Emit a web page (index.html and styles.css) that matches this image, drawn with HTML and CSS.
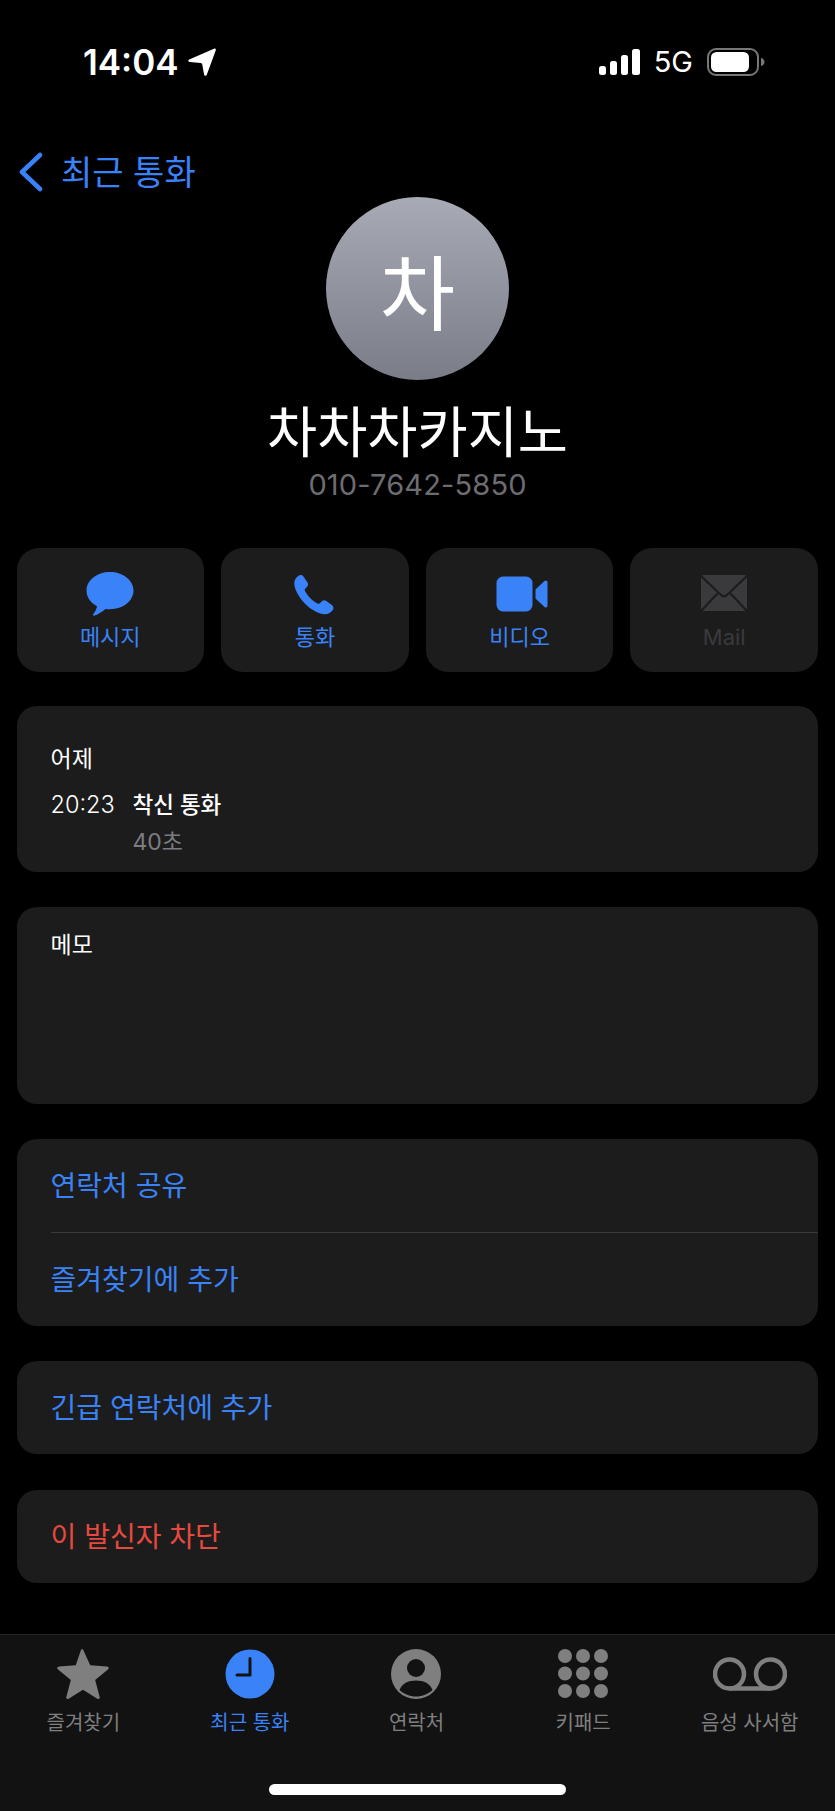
FILE: index.html
```html
<!DOCTYPE html>
<html lang="ko">
<head>
  <meta charset="UTF-8">
  <meta name="viewport" content="width=device-width, initial-scale=1.0">
  <title>차차차카지노</title>
  <link rel="stylesheet" href="styles.css">
</head>
<body>
  <div class="status-bar">
    <div class="status-left">
      <span class="time">14:04</span>
      <svg class="location-icon" viewBox="0 0 28 28"><path d="M26 .8 C27.4 .2 28.2 1 27.7 2.4 L18.8 26.8 C18.2 28.3 16.4 28.2 16.1 26.6 L14.2 16.2 C14.1 15.4 13.6 15 12.8 14.9 L1.8 14 C.2 13.8 -.2 12.2 1.2 11.5 Z" fill="#fff"/></svg>
    </div>
    <div class="status-right">
      <svg class="signal-icon" viewBox="0 0 41 26">
        <rect x="0" y="17" width="7" height="9" rx="2.5"/>
        <rect x="11" y="12" width="7" height="14" rx="2.5"/>
        <rect x="22" y="6" width="7" height="20" rx="2.5"/>
        <rect x="33" y="0" width="8" height="26" rx="2.5"/>
      </svg>
      <span class="network">5G</span>
      <svg class="battery-icon" viewBox="0 0 58 28">
        <rect x="1" y="1" width="50" height="26" rx="8" fill="none" stroke="#77777a" stroke-width="2"/>
        <rect x="4" y="4" width="38" height="20" rx="5.5" fill="#fff"/>
        <path d="M54 10 C56.5 10.5 57.5 12.5 57.5 14 C57.5 15.5 56.5 17.5 54 18 Z" fill="#77777a"/>
      </svg>
    </div>
  </div>

  <div class="nav">
    <svg class="back-icon" viewBox="0 0 26 40"><path d="M22 3 L4 20 L22 37" fill="none" stroke="#3a82f7" stroke-width="4.6" stroke-linecap="round" stroke-linejoin="round"/></svg>
    <span class="back-text">최근 통화</span>
  </div>

  <div class="profile">
    <div class="avatar">차</div>
    <div class="name">차차차카지노</div>
    <div class="phone">010-7642-5850</div>
  </div>

  <div class="actions">
    <div class="action">
      <svg class="action-icon" viewBox="-5.5 0 58 44"><path d="M23.5 0 C36.5 0 47 8.2 47 18.6 C47 29 36.5 37.2 23.5 37.2 C21.6 37.2 20.2 37.1 19 36.9 C15.5 39.8 11 42.6 8 43.6 C6.6 44 6 42.8 6.8 41.9 C8.3 40.2 10 37.5 10.5 34.2 C4 31 0 25.3 0 18.6 C0 8.2 10.5 0 23.5 0 Z" fill="#3a82f7"/></svg>
      <span class="action-label">메시지</span>
    </div>
    <div class="action">
      <svg class="action-icon" viewBox="-8 -2.5 58 44"><path d="M4.2 1.4 C6 .1 8.2 .3 9.4 2 L13.4 7.8 C14.4 9.3 14.3 11 13 12.3 L11.2 14.2 C10.6 14.9 10.6 15.6 11 16.4 C13.6 21.2 18.6 26.4 23.6 29 C24.4 29.4 25.1 29.3 25.8 28.7 L27.7 26.9 C29 25.7 30.8 25.5 32.3 26.5 L37.9 30.4 C39.7 31.7 40 33.9 38.6 35.8 C36.4 38.6 33.6 39.9 30.4 39.7 C22 39.2 13.6 32.6 8.6 26.6 C3.6 20.6 0 13.4 .3 8.6 C.4 5.6 1.6 3.2 4.2 1.4 Z" fill="#3a82f7"/></svg>
      <span class="action-label">통화</span>
    </div>
    <div class="action">
      <svg class="action-icon" viewBox="-5.5 -4.5 58 44"><rect x="0" y="0" width="36" height="35" rx="6.5" fill="#3a82f7"/><path d="M39 13 L48 4.6 C49.4 3.4 51 4.2 51 6 L51 29 C51 30.8 49.4 31.6 48 30.4 L39 22 Z" fill="#3a82f7"/></svg>
      <span class="action-label">비디오</span>
    </div>
    <div class="action action-disabled">
      <svg class="action-icon" viewBox="-6 -3 58 44">
        <rect x="0" y="0" width="46" height="36" rx="2.5" fill="#3a3a3c"/>
        <path d="M0 1 L20 20 C21.8 21.6 24.2 21.6 26 20 L46 1 M0 36 L16.5 18.5 M46 36 L29.5 18.5" fill="none" stroke="#1c1c1c" stroke-width="2.2"/>
      </svg>
      <span class="action-label">Mail</span>
    </div>
  </div>

  <div class="cards">
    <div class="card card-history">
      <div class="card-text">어제</div>
      <div class="call-row">
        <span class="call-time">20:23</span>
        <span class="call-type">착신 통화</span>
      </div>
      <div class="call-length">40초</div>
    </div>
    <div class="card card-memo">
      <div class="card-text">메모</div>
    </div>
    <div class="card">
      <div class="link">연락처 공유</div>
      <div class="divider"></div>
      <div class="link">즐겨찾기에 추가</div>
    </div>
    <div class="card">
      <div class="link">긴급 연락처에 추가</div>
    </div>
    <div class="card">
      <div class="link link-red">이 발신자 차단</div>
    </div>
  </div>

  <div class="tab-bar">
    <div class="tabs">
      <div class="tab">
        <svg class="tab-icon" viewBox="-10 0 74 53"><path d="M27 1.5 L34.4 17.6 L51.4 18.8 C53.4 19 53.9 20.6 52.4 21.8 L39.4 32.6 L44 50 C44.4 51.6 43 52.6 41.6 51.7 L27 42.6 L12.4 51.7 C11 52.6 9.6 51.6 10 50 L14.6 32.6 L1.6 21.8 C.1 20.6 .6 19 2.6 18.8 L19.6 17.6 L24.6 3 C25.2 .8 26.2 .4 27 1.5 Z" fill="#7f7f7f"/></svg>
        <span class="tab-label">즐겨찾기</span>
      </div>
      <div class="tab tab-active">
        <svg class="tab-icon" viewBox="-12 -1 74 52"><circle cx="25" cy="25" r="24.5" fill="#3a82f7"/><path d="M25 9.5 L25 26 L12 26" fill="none" stroke="#121212" stroke-width="3" stroke-linecap="round" stroke-linejoin="round"/></svg>
        <span class="tab-label">최근 통화</span>
      </div>
      <div class="tab">
        <svg class="tab-icon" viewBox="-12 -1 74 52"><circle cx="25" cy="25" r="25" fill="#7f7f7f"/><circle cx="25" cy="19" r="9" fill="#121212"/><path d="M8.5 41 C11 34.5 17 31.5 25 31.5 C33 31.5 39 34.5 41.5 41 C37 45 31.5 47.5 25 47.5 C18.5 47.5 13 45 8.5 41 Z" fill="#121212"/></svg>
        <span class="tab-label">연락처</span>
      </div>
      <div class="tab">
        <svg class="tab-icon" viewBox="-12 -1 74 52" fill="#7f7f7f">
          <circle cx="7" cy="7" r="7"/><circle cx="25" cy="7" r="7"/><circle cx="43" cy="7" r="7"/>
          <circle cx="7" cy="24.5" r="7"/><circle cx="25" cy="24.5" r="7"/><circle cx="43" cy="24.5" r="7"/>
          <circle cx="7" cy="42" r="7"/><circle cx="25" cy="42" r="7"/><circle cx="43" cy="42" r="7"/>
        </svg>
        <span class="tab-label">키패드</span>
      </div>
      <div class="tab">
        <svg class="tab-icon" viewBox="0 -1 74 52"><g fill="none" stroke="#7f7f7f" stroke-width="4.5"><circle cx="16.5" cy="25" r="14.5"/><circle cx="57.5" cy="25" r="14.5"/><path d="M16.5 39.5 L57.5 39.5"/></g></svg>
        <span class="tab-label">음성 사서함</span>
      </div>
    </div>
    <div class="home-indicator"></div>
  </div>
</body>
</html>
```

FILE: styles.css
```css
* {
  box-sizing: border-box;
}
body {
  display: flex;
  flex-direction: column;
  min-height: 1811px;
  margin: 0;
  background-color: #000;
  color: #fff;
  font-family: Inter, "Noto Sans CJK KR", sans-serif;
}

/* status bar */
.status-bar {
  display: flex;
  align-items: center;
  justify-content: space-between;
  height: 124px;
  padding: 0 70px 0 83px;
}
.status-left {
  display: flex;
  align-items: center;
  gap: 9px;
}
.time {
  font-size: 35px;
  font-weight: 600;
  line-height: 40px;
}
.location-icon {
  width: 28px;
  height: 28px;
}
.status-right {
  display: flex;
  align-items: center;
}
.signal-icon {
  width: 41px;
  height: 26px;
  fill: #fff;
}
.network {
  margin-left: 14px;
  font-size: 29px;
  font-weight: 400;
  line-height: 36px;
}
.battery-icon {
  width: 58px;
  height: 28px;
  margin-left: 14px;
}

/* back link */
.nav {
  display: flex;
  align-items: center;
  height: 48px;
  margin-top: 24px;
  padding-left: 18px;
}
.back-icon {
  width: 26px;
  height: 40px;
}
.back-text {
  margin-left: 17px;
  padding-bottom: 4px;
  font-size: 34px;
  color: #3a82f7;
}

/* contact header */
.profile {
  display: flex;
  flex-direction: column;
  align-items: center;
  margin-top: 1px;
}
.avatar {
  display: flex;
  align-items: center;
  justify-content: center;
  width: 183px;
  height: 183px;
  border-radius: 50%;
  background: linear-gradient(#a8abb6, #7a7d88);
  font-size: 82px;
  font-weight: 400;
}
.name {
  margin-top: 17px;
  font-size: 54.5px;
  line-height: 70px;
}
.phone {
  margin-top: -2px;
  font-size: 29px;
  line-height: 40px;
  letter-spacing: 0.15px;
  color: #6d6d71;
}

/* action buttons */
.actions {
  display: grid;
  grid-template-columns: repeat(4, 187.5px);
  justify-content: space-between;
  margin: 43px 17px 0 16.5px;
}
.action {
  display: flex;
  flex-direction: column;
  align-items: center;
  height: 124px;
  padding-top: 24px;
  border-radius: 22px;
  background-color: #1c1c1c;
  color: #3a82f7;
}
.action-icon {
  width: 58px;
  height: 44px;
}
.action-label {
  margin-top: 5px;
  font-size: 22px;
  line-height: 32px;
}
.action-disabled {
  color: #3a3a3c;
}

/* cards */
.cards {
  display: flex;
  flex-direction: column;
  gap: 35px;
  margin: 34px 17px 0 16.5px;
}
.card {
  border-radius: 20px;
  background-color: #1c1c1c;
}
.card-history {
  height: 166px;
  padding: 36px 34px 0;
}
.card-memo {
  height: 197px;
  padding: 21px 34px 0;
}
.card-text {
  font-size: 23px;
  line-height: 34px;
}
.call-row {
  display: flex;
  gap: 18px;
  margin-top: 12px;
  font-size: 23px;
  line-height: 34px;
}
.call-time {
  width: 64px;
  font-size: 23.5px;
  font-weight: 300;
}
.call-type {
  font-size: 22.5px;
  font-weight: 500;
}
.call-length {
  margin-top: 3px;
  padding-left: 82px;
  font-size: 23px;
  line-height: 34px;
  color: #7c7c80;
}
.link {
  height: 93px;
  padding-left: 34px;
  font-size: 28px;
  line-height: 95px;
  color: #3a82f7;
}
.card:last-child {
  margin-top: 1px;
}
.link-red {
  color: #e5493f;
}
.divider {
  height: 1px;
  margin-left: 34px;
  background-color: #3a3a3c;
}

/* tab bar */
.tab-bar {
  display: flex;
  flex-direction: column;
  align-items: center;
  height: 177px;
  margin-top: auto;
  border-top: 1px solid #232323;
  background-color: #121212;
}
.tabs {
  display: grid;
  grid-template-columns: repeat(5, 1fr);
  width: 100%;
  padding: 13px 2px 0 0;
}
.tab {
  display: flex;
  flex-direction: column;
  align-items: center;
  color: #7f7f7f;
}
.tab-icon {
  width: 74px;
  height: 52px;
}
.tab-label {
  margin-top: 8px;
  font-size: 20px;
  line-height: 30px;
}
.tab-active {
  color: #3a82f7;
}
.home-indicator {
  width: 297px;
  height: 11px;
  margin-top: 46px;
  border-radius: 6px;
  background-color: #fff;
}
```
